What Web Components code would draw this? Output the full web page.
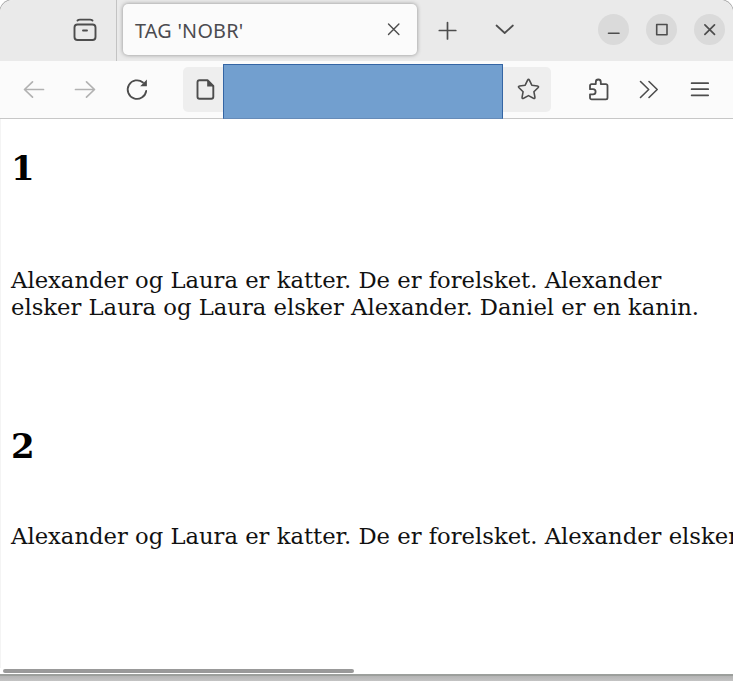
<!DOCTYPE html>
<html lang="no">
<head>
<meta charset="utf-8">
<title>TAG 'NOBR'</title>
<style>
html,body{margin:0;padding:0;background:#fff;overflow:hidden}
</style>
</head>
<body>
<browser-window>
  <tab-strip slot="tabs"><browser-tab>TAG 'NOBR'</browser-tab></tab-strip>
  <nav-toolbar slot="toolbar"></nav-toolbar>
  <page-section style="--space:78px"><span slot="title">1</span>Alexander og Laura er katter. De er forelsket. Alexander elsker Laura og Laura elsker Alexander. Daniel er en kanin.</page-section>
  <page-section style="--space:56px;--wrap:nowrap"><span slot="title">2</span>Alexander og Laura er katter. De er forelsket. Alexander elsker</page-section>
</browser-window>
<script>
const define = (name, html) => customElements.define(name, class extends HTMLElement {
  constructor() {
    super();
    this.attachShadow({ mode: 'open' }).innerHTML = html;
  }
});

const shapes = {
  archive: '<rect x="5.5" y="9.5" width="21" height="15.5" rx="3"/><path d="M8.500 5.500Q9.500 4.600 11 4.600H21Q22.500 4.600 23.500 5.500M14 15.500h4"/>',
  close: '<path d="M10.500 10l10.400 10.400M20.900 10L10.500 20.400" stroke-width="1.4"/>',
  plus: '<path d="M15.500 7.500v16.500M7.300 15.500h16.500" stroke-width="1.700"/>',
  chevron: '<path d="M7.500 11.500l8.200 7.500 8.200-7.500" stroke-width="1.700"/>',
  back: '<path d="M25.500 15.500H6.700M14.500 7.900l-8 7.600 8 7.600" stroke-width="1.700"/>',
  forward: '<path d="M6.500 15.500h18.800M17.500 7.900l8 7.600-8 7.600" stroke-width="1.700"/>',
  reload: '<path d="M26.200 17A9.300 9.300 0 1 1 23 8.500" stroke-width="1.800"/><path d="M26.900 5.500v6.300q0 .5-.5.500h-6.200z" fill="currentColor" stroke="none"/>',
  file: '<path d="M9.500 6.200h8l5.800 5.800v10.800a2 2 0 0 1-2 2H9.500a2 2 0 0 1-2-2V8.200a2 2 0 0 1 2-2z"/><path d="M17.200 6v6.500h6.500z" fill="currentColor" stroke="none"/>',
  star: '<path d="M14.600 6.200q.9-1.700 1.800 0l2.400 5 5.600.8q1.900.3.600 1.700l-4.100 4 1 5.500q.3 1.900-1.500 1l-4.900-2.600-4.900 2.600q-1.800.9-1.500-1l1-5.500-4.100-4q-1.300-1.400.6-1.700l5.600-.8z" stroke-width="1.600"/>',
  puzzle: '<path d="M8.600 10.100h4.200V8a2.500 2.500 0 0 1 5 0v2.100h5.100a1.600 1.600 0 0 1 1.600 1.600v12.100a1.600 1.600 0 0 1-1.600 1.600H8.600a1.600 1.600 0 0 1-1.600-1.600v-3.400h3a2.500 2.500 0 0 0 0-5.200H7v-3.500a1.600 1.600 0 0 1 1.600-1.600z" stroke-width="1.800"/>',
  more: '<path d="M6.500 7.500l8.200 8-8.200 8M15 7.500l8.200 8-8.200 8" stroke-width="1.600"/>',
  menu: '<path d="M6.600 9.200h16.600M6.600 15.200h16.600M6.600 21.300h16.600" stroke-width="1.700"/>',
  minimize: '<path d="M10.500 19.200h10.500" stroke-width="1.600"/>',
  maximize: '<rect x="10.700" y="10.500" width="10.300" height="10.300" stroke-width="1.600"/>',
  shut: '<path d="M10.900 10.800l9.600 9.600M20.500 10.800L10.900 20.400" stroke-width="1.700"/>'
};
customElements.define('ui-icon', class extends HTMLElement {
  connectedCallback() {
    if (this.shadowRoot) return;
    this.attachShadow({ mode: 'open' }).innerHTML = `<style>:host{display:block;flex:none;width:31px;height:31px;color:#4d4d4d}svg{display:block}</style>
    <svg width="31" height="31" fill="none" stroke="currentColor" stroke-width="1.9" stroke-linecap="round" stroke-linejoin="round">${shapes[this.getAttribute('name')]}</svg>`;
  }
});

define('browser-tab', `<style>
:host{display:flex;align-items:center;box-sizing:border-box;flex:none;width:294px;height:51px;margin:4px 0 0 6px;padding:0 8px 0 12px;border-radius:5px;background:#fbfbfb;box-shadow:0 0 4px #8e8e8e;color:#4b4b50;font:19.800px/28px "Noto Sans","Open Sans",sans-serif}
span{flex:1;white-space:nowrap;letter-spacing:.25px;padding-top:2px}
</style><span><slot></slot></span><ui-icon name="close"></ui-icon>`);

define('tab-strip', `<style>
:host{display:flex;height:61px;background:#eaeaea}
.overview{display:flex;border-right:1px solid #c3c3c3;padding:15px 0 0 69px;width:47px}
.plus{margin:15px 0 0 15px}.chevron{margin:14px 0 0 26px}
.controls{display:flex;gap:17px;margin:14px 0 0 78px}
.controls ui-icon{border-radius:50%;background:#dadada}
</style><div class="overview"><ui-icon name="archive"></ui-icon></div><slot></slot>
<ui-icon class="plus" name="plus"></ui-icon><ui-icon class="chevron" name="chevron"></ui-icon>
<div class="controls"><ui-icon name="minimize"></ui-icon><ui-icon name="maximize"></ui-icon><ui-icon name="shut"></ui-icon></div>`);

define('nav-toolbar', `<style>
:host{display:flex;height:57px;background:#fbfbfb;border-bottom:1px solid #c7c7c7}
.nav{display:flex;gap:20px;padding:13px 0 0 18px}
.dim{color:#b2b2b2}
.address{display:flex;width:368px;height:45px;margin:6px 0 0 32px;border-radius:5px;background:#eee}
.address>ui-icon{margin-top:7px}
.address>.file{margin-left:7px;width:30px}.address>.star{margin-left:10px}
.mask{box-sizing:border-box;flex:none;width:280px;height:55px;margin:-3px 0 0 3px;background:#729fcf;border:1px solid #3465a4;border-bottom-color:#668bb8}
.actions{display:flex;padding:13px 0 0 32px;gap:20px}
</style><div class="nav"><ui-icon class="dim" name="back"></ui-icon><ui-icon class="dim" name="forward"></ui-icon><ui-icon name="reload"></ui-icon></div>
<div class="address"><ui-icon class="file" name="file"></ui-icon><div class="mask"></div><ui-icon class="star" name="star"></ui-icon></div>
<div class="actions"><ui-icon name="puzzle"></ui-icon><ui-icon name="more"></ui-icon><ui-icon name="menu"></ui-icon></div>`);

define('page-section', `<style>
:host{display:block;color:#111;font:22.700px/27px "DejaVu Serif",serif}
h2{margin:0 0 var(--space);font-size:34px;line-height:42px;color:#000}
p{margin:0;white-space:var(--wrap,normal)}
</style><h2><slot name="title"></slot></h2><p><slot></slot></p>`);

define('browser-window', `<style>
:host{display:flex;flex-direction:column;width:733px;height:681px;overflow:hidden;background:#fff}
.frame{height:674px;display:flex;flex-direction:column;border-radius:13px 13px 0 0;overflow:hidden;box-shadow:0 0 0 1px #aaa}
main{display:flex;flex-direction:column;gap:104px;height:549px;padding:28px 0 0 10px;box-sizing:border-box;overflow:hidden;border-left:1px solid #f4f4f4}
page-section{flex:none}
.scroll{width:351px;height:4px;margin:1px 0 0 3px;border-radius:2px;background:#999}
.shadow{height:7px;box-sizing:border-box;border-top:2px solid #9c9f9c;background:linear-gradient(#b4b4b4,#c3c3c3)}
</style><div class="frame"><slot name="tabs"></slot><slot name="toolbar"></slot><main><slot></slot></main><div class="scroll"></div></div><div class="shadow"></div>`);
</script>
</body>
</html>
